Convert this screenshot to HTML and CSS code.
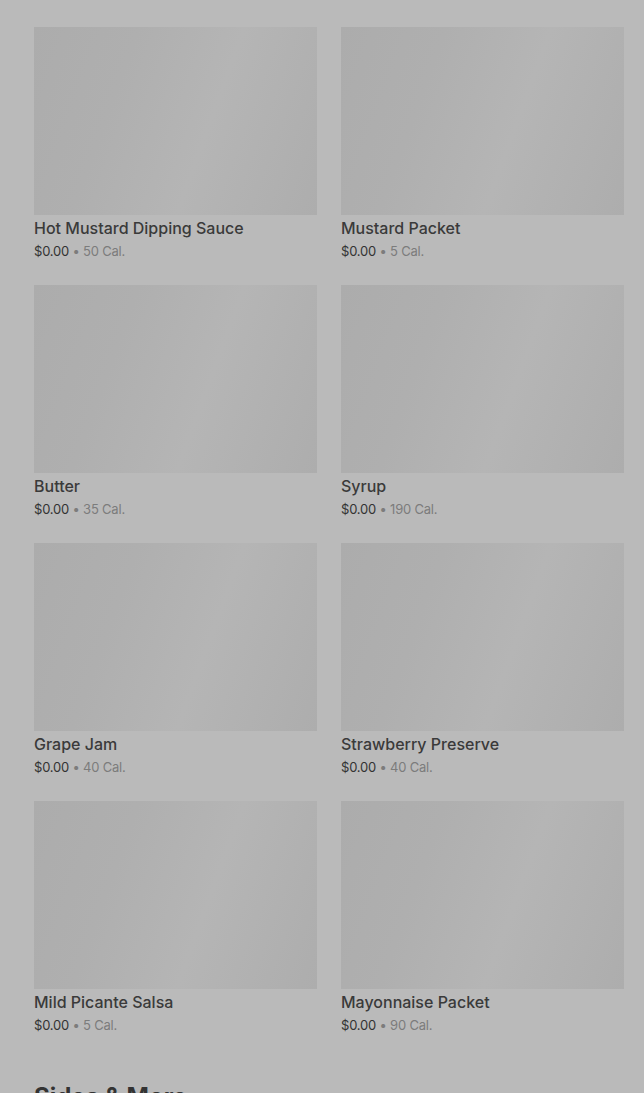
FILE: index.html
```html
<!doctype html>
<html lang="en">
  <head>
    <title>Condiments</title>
    <link rel="stylesheet" href="styles.css">
  </head>
  <body>
    <div id="menu">
      <div class="item-grid">
        <div class="item">
          <div class="thumb"></div>
          <div class="item-name">Ketchup Packet</div>
          <div class="item-meta"><span class="price">$0.00</span> • 10 Cal.</div>
        </div>
        <div class="item">
          <div class="thumb"></div>
          <div class="item-name">Salt Packet</div>
          <div class="item-meta"><span class="price">$0.00</span> • 0 Cal.</div>
        </div>
        <div class="item">
          <div class="thumb"></div>
          <div class="item-name">Hot Mustard Dipping Sauce</div>
          <div class="item-meta"><span class="price">$0.00</span> • 50 Cal.</div>
        </div>
        <div class="item">
          <div class="thumb"></div>
          <div class="item-name">Mustard Packet</div>
          <div class="item-meta"><span class="price">$0.00</span> • 5 Cal.</div>
        </div>
        <div class="item">
          <div class="thumb"></div>
          <div class="item-name">Butter</div>
          <div class="item-meta"><span class="price">$0.00</span> • 35 Cal.</div>
        </div>
        <div class="item">
          <div class="thumb"></div>
          <div class="item-name">Syrup</div>
          <div class="item-meta"><span class="price">$0.00</span> • 190 Cal.</div>
        </div>
        <div class="item">
          <div class="thumb"></div>
          <div class="item-name">Grape Jam</div>
          <div class="item-meta"><span class="price">$0.00</span> • 40 Cal.</div>
        </div>
        <div class="item">
          <div class="thumb"></div>
          <div class="item-name">Strawberry Preserve</div>
          <div class="item-meta"><span class="price">$0.00</span> • 40 Cal.</div>
        </div>
        <div class="item">
          <div class="thumb"></div>
          <div class="item-name">Mild Picante Salsa</div>
          <div class="item-meta"><span class="price">$0.00</span> • 5 Cal.</div>
        </div>
        <div class="item">
          <div class="thumb"></div>
          <div class="item-name">Mayonnaise Packet</div>
          <div class="item-meta"><span class="price">$0.00</span> • 90 Cal.</div>
        </div>
      </div>
      <h2 class="section-title">Sides &amp; More</h2>
    </div>
  </body>
</html>
```

FILE: styles.css
```css
body,
html {
  margin: 0;
  background-color: #bababa;
  font-family: Inter, "Noto Sans", sans-serif;
  overflow: hidden;
}

#menu {
  padding: 0 20px 0 34px;
  margin-top: -231px;
}

.item-grid {
  display: grid;
  grid-template-columns: 1fr 1fr;
  column-gap: 24px;
  row-gap: 25px;
}

.thumb {
  height: 188px;
  background: linear-gradient(110deg, #acacac 0%, #afafaf 30%, #b5b5b5 60%, #adadad 100%);
}

.item-name {
  margin-top: 3px;
  font-size: 16px;
  line-height: 20px;
  font-weight: 500;
  color: #3a3a3a;
}

.item-meta {
  margin-top: 4px;
  font-size: 13px;
  line-height: 18px;
  letter-spacing: -0.2px;
  color: #7c7c7c;
}

.price {
  color: #333;
}

.section-title {
  margin: 47px 0 0;
  font-size: 24px;
  line-height: 32px;
  font-weight: 700;
  color: #333;
}
```
